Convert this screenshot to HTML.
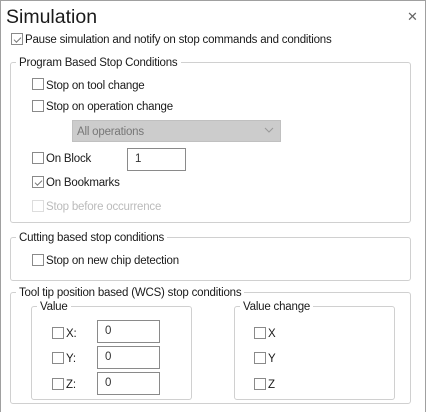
<!DOCTYPE html>
<html><head><style>
*{margin:0;padding:0;box-sizing:border-box}
body{width:426px;height:412px;background:#fff;position:relative;overflow:hidden;font-family:"Liberation Sans",sans-serif;font-size:11.5px;color:#1a1a1a;letter-spacing:-0.2px}
.a{position:absolute}
.win{left:0;top:0;width:426px;height:412px;border:1px solid #a0a0a0;border-bottom:none}
.cb{position:absolute;width:12px;height:12px;border:1px solid #8a8a8a;background:#fff}
.cb.dis{border-color:#ddd}
.t{position:absolute;line-height:14px;white-space:nowrap}
.g{position:absolute;border:1px solid #d0d0d0;border-radius:3px}
.gl{position:absolute;background:#fff;padding:0 3px;line-height:14px;white-space:nowrap}
.in{position:absolute;border:1px solid #8a8a8a;background:#fff;padding:3px 0 0 7px;line-height:14px;color:#333}
.ck::after{content:"";position:absolute;left:2px;top:1px;width:6px;height:3px;border-left:1px solid #777;border-bottom:1px solid #777;transform:rotate(-45deg);transform-origin:center;margin-top:2px}
</style></head><body>
<div class="a win"></div>
<div class="t" style="left:6px;top:5px;font-size:19.5px;line-height:24px;letter-spacing:0">Simulation</div>
<div class="t" style="left:407px;top:10px;font-size:13px;color:#666">✕</div>

<div class="cb ck" style="left:11px;top:33px"></div>
<div class="t" style="left:25px;top:33px">Pause simulation and notify on stop commands and conditions</div>

<div class="g" style="left:10px;top:62px;width:401px;height:161px"></div>
<div class="gl" style="left:16px;top:56px">Program Based Stop Conditions</div>
<div class="cb" style="left:32px;top:78px"></div><div class="t" style="left:46px;top:79px">Stop on tool change</div>
<div class="cb" style="left:32px;top:100px"></div><div class="t" style="left:46px;top:100px">Stop on operation change</div>
<div class="a" style="left:72px;top:120px;width:209px;height:22px;background:#cccccc;border:1px solid #c0c0c0"></div>
<div class="t" style="left:77px;top:125px;color:#777">All operations</div>
<svg class="a" style="left:264px;top:127px" width="10" height="7"><path d="M1 1 L5 5 L9 1" stroke="#999" fill="none"/></svg>
<div class="cb" style="left:32px;top:152px"></div><div class="t" style="left:46px;top:152px">On Block</div>
<div class="in" style="left:127px;top:148px;width:59px;height:23px">1</div>
<div class="cb ck" style="left:32px;top:176px"></div><div class="t" style="left:46px;top:176px">On Bookmarks</div>
<div class="cb dis" style="left:32px;top:200px"></div><div class="t" style="left:46px;top:200px;color:#bbb">Stop before occurrence</div>

<div class="g" style="left:10px;top:237px;width:401px;height:44px"></div>
<div class="gl" style="left:16px;top:231px">Cutting based stop conditions</div>
<div class="cb" style="left:32px;top:254px"></div><div class="t" style="left:46px;top:254px">Stop on new chip detection</div>

<div class="g" style="left:10px;top:292px;width:401px;height:112px"></div>
<div class="gl" style="left:16px;top:286px">Tool tip position based (WCS) stop conditions</div>

<div class="g" style="left:31px;top:306px;width:161px;height:94px"></div>
<div class="gl" style="left:37px;top:300px">Value</div>
<div class="cb" style="left:52px;top:327px"></div><div class="t" style="left:66px;top:327px">X:</div>
<div class="in" style="left:97px;top:320px;width:63px;height:23px">0</div>
<div class="cb" style="left:52px;top:352px"></div><div class="t" style="left:66px;top:352px">Y:</div>
<div class="in" style="left:97px;top:346px;width:63px;height:23px">0</div>
<div class="cb" style="left:52px;top:378px"></div><div class="t" style="left:66px;top:378px">Z:</div>
<div class="in" style="left:97px;top:372px;width:63px;height:23px">0</div>

<div class="g" style="left:234px;top:306px;width:161px;height:94px"></div>
<div class="gl" style="left:240px;top:300px">Value change</div>
<div class="cb" style="left:254px;top:327px"></div><div class="t" style="left:268px;top:327px">X</div>
<div class="cb" style="left:254px;top:352px"></div><div class="t" style="left:268px;top:352px">Y</div>
<div class="cb" style="left:254px;top:378px"></div><div class="t" style="left:268px;top:378px">Z</div>
</body></html>
